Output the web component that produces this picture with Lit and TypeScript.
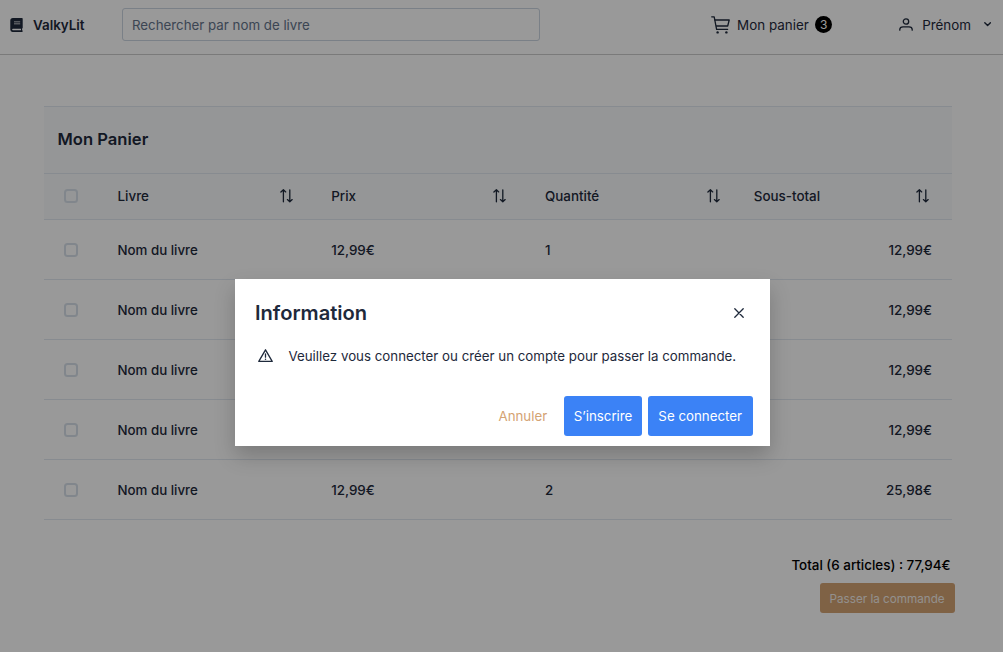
import { LitElement, html, css, svg } from "lit";
import { customElement, property } from "lit/decorators.js";

interface CartLine {
  name: string;
  price?: string;
  quantity?: number;
  subtotal: string;
}

const icons = {
  book: svg`<path fill="currentColor" fill-rule="evenodd" d="M2.9 0H12a.7.7 0 0 1 .7.7v9a.7.7 0 0 1-.6.7v1.9a.6.6 0 0 1 .6.6v.4a.7.7 0 0 1-.7.7H2.9A2.5 2.5 0 0 1 .3 11.4V2.6A2.6 2.6 0 0 1 2.9 0ZM2.9 10.7a.75.75 0 0 0 0 1.5h8.1v-1.5ZM4 3.5v.8h6.2v-.8ZM4 5.5v.8h6.2v-.8Z"/>`,
  cart: svg`<g fill="none" stroke="currentColor" stroke-width="1.3" stroke-linecap="round" stroke-linejoin="round"><path d="M.7.8h2.5l2.4 12.6h11"/><path d="M4 4h14.2l-1.5 6H5.4"/></g><circle cx="6.6" cy="16.4" r="1.2" fill="currentColor"/><circle cx="15.4" cy="16.4" r="1.2" fill="currentColor"/>`,
  user: svg`<g fill="none" stroke="currentColor" stroke-width="1.3" stroke-linecap="round"><circle cx="7" cy="3.5" r="2.7"/><path d="M.8 12.2v-.6c0-1.8 1.3-2.8 3.2-2.8h6c1.9 0 3.2 1 3.2 2.8v.6"/></g>`,
  chevron: svg`<path fill="none" stroke="currentColor" stroke-width="1.4" stroke-linecap="round" stroke-linejoin="round" d="m.8.8 2.8 2.8L6.4.8"/>`,
  sort: svg`<g fill="none" stroke="currentColor" stroke-width="1.3" stroke-linecap="round" stroke-linejoin="round"><path d="M3.4 12.8V1M.9 3.1 3.4.8l2.3 2.1"/><path d="M9.8.8v11.8M7.4 10.6l2.4 2.2 2.4-2.2"/></g>`,
  close: svg`<path fill="none" stroke="currentColor" stroke-width="1.3" stroke-linecap="round" d="m.8.8 8.4 8.4M9.2.8.8 9.2"/>`,
  warning: svg`<g fill="none" stroke="currentColor" stroke-width="1.3" stroke-linecap="round" stroke-linejoin="round"><path d="M7.5.8.8 12.4h13.4Z"/><path d="M7.5 5v3.2"/></g><circle cx="7.5" cy="10.2" r=".75" fill="currentColor"/>`,
};

const icon = (name: keyof typeof icons, w: number, h: number) =>
  html`<svg width=${w} height=${h} viewBox="0 0 ${w} ${h}" aria-hidden="true">${icons[name]}</svg>`;

@customElement("shop-header")
export class ShopHeader extends LitElement {
  static styles = css`
    :host {
      display: flex;
      align-items: flex-start;
      box-sizing: border-box;
      height: 55px;
      padding: 8px 12px 0 10px;
      border-bottom: 1px solid #cbcbcb;
      color: #1e293b;
    }
    svg { display: block; flex: none; }
    .brand { display: flex; align-items: center; gap: 10px; width: 112px; height: 33px; font-weight: 600; font-size: 13.4px; }
    .label { padding-top: 1px; }
    .search {
      box-sizing: border-box;
      width: 418px;
      height: 33px;
      padding: 0 9px;
      border: 1px solid #cbd5e1;
      border-radius: 3px;
      line-height: 32px;
      color: #64748b;
    }
    .links { display: flex; align-items: center; height: 33px; margin-left: auto; font-size: 13.4px; }
    .cart { display: flex; align-items: center; gap: 7px; margin-right: 67px; }
    .badge { width: 17px; height: 17px; margin-left: -0.6px; border-radius: 50%; background: #000; color: #fff; font-size: 12px; line-height: 17px; text-align: center; }
    .account { display: flex; align-items: center; }
    .name { margin: 0 13px 0 9px; }
  `;

  render() {
    return html`
      <div class="brand">${icon("book", 13, 14)}<span class="label">ValkyLit</span></div>
      <div class="search">Rechercher par nom de livre</div>
      <div class="links">
        <div class="cart">${icon("cart", 19, 18)}<span class="label">Mon panier</span><span class="badge">3</span></div>
        <div class="account">${icon("user", 14, 13)}<span class="label name">Prénom</span>${icon("chevron", 7, 5)}</div>
      </div>
    `;
  }
}

@customElement("cart-table")
export class CartTable extends LitElement {
  @property({ attribute: false }) lines: CartLine[] = [];

  static styles = css`
    :host { display: block; color: #1e293b; font-weight: 500; }
    .title {
      box-sizing: border-box;
      height: 67px;
      padding-left: 13.5px;
      border-top: 1px solid #e2e8f0;
      background: #f8fafc;
      font-size: 16.6px;
      font-weight: 600;
      line-height: 64px;
    }
    .row {
      display: grid;
      grid-template-columns: 73.5px 213.7px 213.8px 208.8px 1fr;
      align-items: center;
      box-sizing: border-box;
      height: 60.1px;
      padding: 1px 20px 0 0;
      border-bottom: 1px solid #e2e8f0;
    }
    .head { height: 47px; padding: 0 23.5px 1px 0; background: #f8fafc; border-top: 1px solid #e2e8f0; font-size: 13.4px; }
    .cell { display: flex; justify-content: space-between; align-items: center; padding-right: 38.5px; }
    .third { padding-right: 34px; }
    .last { padding-right: 0; }
    .item { padding-top: 2px; }
    .price { font-size: 13.4px; }
    .amount { font-size: 13.4px; text-align: right; }
    .box { box-sizing: border-box; width: 14px; height: 14px; margin-left: 19.5px; border: 2px solid #d8e0e9; border-radius: 3.5px; }
    .line .box { margin-bottom: 1px; }
    svg { display: block; }
  `;

  render() {
    const heads = ["Livre", "Prix", "Quantité", "Sous-total"];
    const variants = ["", "", "third", "last"];
    return html`
      <div class="title">Mon Panier</div>
      <div class="row head">
        <span class="box"></span>
        ${heads.map((h, i) => html`<div class="cell ${variants[i]}"><span>${h}</span>${icon("sort", 13, 14)}</div>`)}
      </div>
      ${this.lines.map(
        (l) => html`<div class="row line">
          <span class="box"></span><span class="item">${l.name}</span><span class="price">${l.price}</span>
          <span class="item">${l.quantity}</span><span class="amount">${l.subtotal}</span>
        </div>`
      )}
    `;
  }
}

@customElement("info-dialog")
export class InfoDialog extends LitElement {
  static styles = css`
    :host {
      display: block;
      box-sizing: border-box;
      width: 534.5px;
      height: 167px;
      padding: 20px 17px 0 20px;
      background: #fff;
      box-shadow: 0 10px 20px rgba(0, 0, 0, 0.2);
      color: #1e293b;
    }
    svg { display: block; }
    .top { display: flex; align-items: center; justify-content: space-between; height: 27px; padding-right: 8.5px; }
    .heading { padding-top: 1px; font-size: 20.1px; font-weight: 600; }
    .message { display: flex; align-items: center; gap: 15.5px; height: 20px; margin-top: 19.5px; padding-left: 3px; }
    .text { padding-top: 2px; }
    .actions { display: flex; justify-content: flex-end; margin-top: 30.5px; line-height: 40px; }
    .cancel { margin-right: 16.5px; color: #d4a373; }
    .button { padding: 0 10px; border-radius: 3px; background: #3b82f6; color: #fff; }
    .button + .button { margin-left: 6px; padding-right: 10.5px; }
  `;

  render() {
    return html`
      <div class="top"><span class="heading">Information</span>${icon("close", 10, 10)}</div>
      <div class="message">
        ${icon("warning", 15, 13)}<span class="text">Veuillez vous connecter ou créer un compte pour passer la commande.</span>
      </div>
      <div class="actions">
        <span class="cancel">Annuler</span><span class="button">S’inscrire</span><span class="button">Se connecter</span>
      </div>
    `;
  }
}

@customElement("app-root")
export class AppRoot extends LitElement {
  private lines: CartLine[] = [
    { name: "Nom du livre", price: "12,99€", quantity: 1, subtotal: "12,99€" },
    { name: "Nom du livre", subtotal: "12,99€" },
    { name: "Nom du livre", subtotal: "12,99€" },
    { name: "Nom du livre", subtotal: "12,99€" },
    { name: "Nom du livre", price: "12,99€", quantity: 2, subtotal: "25,98€" },
  ];

  static styles = css`
    :host {
      display: block;
      position: relative;
      height: 652px;
      overflow: hidden;
      background: #fff;
      font: 400 13.3px/1.2 Inter, "Liberation Sans", sans-serif;
      white-space: nowrap;
    }
    .table { width: 908px; margin: 51px 0 0 44px; }
    .summary { display: flex; flex-direction: column; align-items: flex-end; padding: 36.4px 48.4px 0 0; }
    .total { height: 16px; margin-right: 4px; font-size: 13.4px; font-weight: 500; line-height: 16px; color: #000; }
    .order { box-sizing: border-box; width: 135px; height: 30px; margin-top: 10.5px; border-radius: 3px; background: #d4a373; color: #f5f1ec; font-size: 11.7px; line-height: 32px; text-align: center; }
    .overlay { position: absolute; inset: 0; display: flex; align-items: flex-start; padding: 279px 0 0 235px; background: rgba(0, 0, 0, 0.4); }
  `;

  render() {
    return html`
      <shop-header></shop-header>
      <cart-table class="table" .lines=${this.lines}></cart-table>
      <div class="summary">
        <div class="total">Total (6 articles) : 77,94€</div>
        <div class="order">Passer la commande</div>
      </div>
      <div class="overlay"><info-dialog></info-dialog></div>
    `;
  }
}
